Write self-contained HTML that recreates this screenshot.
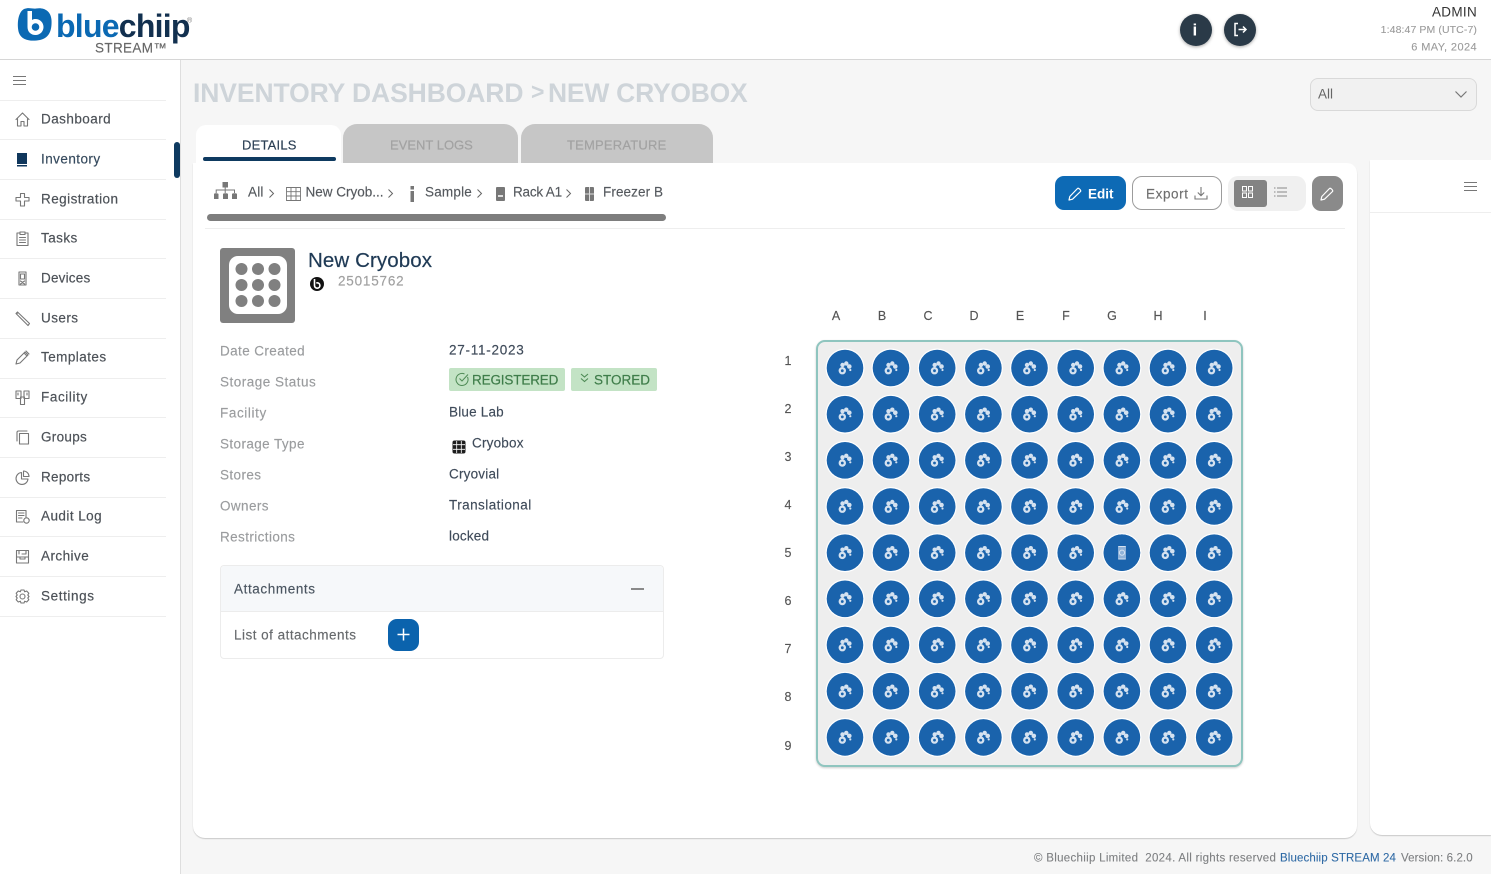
<!DOCTYPE html>
<html lang="en"><head><meta charset="utf-8"><title>Inventory Dashboard</title>
<style>
*{box-sizing:border-box}
html,body{margin:0;padding:0;width:1491px;height:874px;overflow:hidden;background:#f6f6f6;font-family:"Liberation Sans",sans-serif}
.a{position:absolute}
.t{position:absolute;white-space:nowrap;line-height:1;transform:translateY(-50%)}
.nav{font-size:13.5px;color:#4d5258;left:41px;letter-spacing:.45px;-webkit-text-stroke:.2px #4d5258}
.d{position:absolute;left:0;width:166px;height:1px;background:#eeeeee}
.k{font-size:13.5px;color:#9a9c9e;left:220px;letter-spacing:.4px;-webkit-text-stroke:.15px #9a9c9e}
.v{font-size:13.5px;color:#3f4b5a;left:449px;letter-spacing:.3px;-webkit-text-stroke:.15px #3f4b5a}
.bc{font-size:13.5px;color:#55595e;letter-spacing:.2px;-webkit-text-stroke:.15px #55595e}
svg{position:absolute;overflow:visible}
.i{fill:none;stroke:#777;stroke-width:1.1;stroke-linecap:round;stroke-linejoin:round}
.hd{font-size:12.5px;color:#555;top:316px;transform:translate(-50%,-50%);-webkit-text-stroke:.15px #555}
.rw{font-size:12.5px;color:#555;left:788px;transform:translate(-50%,-50%);-webkit-text-stroke:.15px #555}
</style></head><body>

<!-- header -->
<div class="a" style="left:0;top:0;width:1491px;height:60px;background:#fff;border-bottom:1px solid #d6d6d6"></div>
<svg style="left:16px;top:7px" width="38" height="36" viewBox="0 0 38 36"><path d="M8 2C13 0 16 2 20 1.500C28 0 35 4 35.500 13C36 22 34 31 24 33C16 34.500 6 34 3 26C1 20 1 6 8 2Z" fill="#0b69b3"/><path d="M11.500 4V20C11.500 25 15 28 19.500 28C24 28 27.500 24.500 27.500 20C27.500 15.500 24 12 19.500 12C18 12 17 12.300 16 13V4Z" fill="#fff"/><circle cx="19.500" cy="20" r="3.800" fill="#0b69b3"/></svg>
<div class="t" style="left:56px;top:26px;font-size:32px;font-weight:700;letter-spacing:-.75px;color:#0b69b3">blue<span style="color:#12304f">chiip</span></div>
<div class="t" style="left:187px;top:21px;font-size:7px;color:#777">®</div>
<div class="t" style="left:95px;top:48px;font-size:13.500px;color:#666;letter-spacing:.35px;-webkit-text-stroke:.15px #666">STREAM™</div>

<div class="a" style="left:1180px;top:14px;width:32px;height:32px;border-radius:50%;background:#2a3a48;box-shadow:0 1px 3px rgba(0,0,0,.35)"></div>
<div class="t" style="left:1192.500px;top:30px;font-size:17px;font-weight:700;color:#fff">i</div>
<div class="a" style="left:1224px;top:14px;width:32px;height:32px;border-radius:50%;background:#2a3a48;box-shadow:0 1px 3px rgba(0,0,0,.35)"></div>
<svg style="left:1233px;top:22px" width="15" height="15" viewBox="0 0 15 15"><path d="M5 1.500H2V13.500H5M5.500 7.500H13M10 4.500L13 7.500L10 10.500" fill="none" stroke="#fff" stroke-width="1.500"/></svg>

<div class="t" style="right:14px;top:12px;font-size:13.5px;color:#333;letter-spacing:.3px">ADMIN</div>
<div class="t" style="right:14px;top:30px;font-size:10.5px;color:#9a9a9a;letter-spacing:.1px;-webkit-text-stroke:.1px #9a9a9a">1:48:47 PM (UTC-7)</div>
<div class="t" style="right:14px;top:48px;font-size:11px;color:#9a9a9a;letter-spacing:.4px;-webkit-text-stroke:.1px #9a9a9a">6 MAY, 2024</div>

<!-- sidebar -->
<div class="a" style="left:0;top:60px;width:181px;height:814px;background:#fff;border-right:1px solid #dedede"></div>
<svg style="left:13px;top:76px" width="13" height="9"><path d="M0 .500H13M0 4.500H13M0 8.500H13" stroke="#777" stroke-width="1"/></svg>
<div class="d" style="top:100px"></div><div class="d" style="top:139px"></div><div class="d" style="top:179px"></div><div class="d" style="top:219px"></div><div class="d" style="top:258px"></div><div class="d" style="top:298px"></div><div class="d" style="top:338px"></div><div class="d" style="top:378px"></div><div class="d" style="top:417px"></div><div class="d" style="top:457px"></div><div class="d" style="top:497px"></div><div class="d" style="top:536px"></div><div class="d" style="top:576px"></div><div class="d" style="top:616px"></div>
<div class="a" style="left:174px;top:142px;width:6px;height:36px;background:#0e3a60;border-radius:3px"></div>

<div class="t nav" style="top:119px">Dashboard</div>
<div class="t nav" style="top:159px;color:#2f4a63">Inventory</div>
<div class="t nav" style="top:199px">Registration</div>
<div class="t nav" style="top:238px">Tasks</div>
<div class="t nav" style="top:278px;letter-spacing:.2px">Devices</div>
<div class="t nav" style="top:318px">Users</div>
<div class="t nav" style="top:357px">Templates</div>
<div class="t nav" style="top:397px;letter-spacing:.6px">Facility</div>
<div class="t nav" style="top:437px;letter-spacing:.3px">Groups</div>
<div class="t nav" style="top:477px;letter-spacing:.3px">Reports</div>
<div class="t nav" style="top:516px">Audit Log</div>
<div class="t nav" style="top:556px">Archive</div>
<div class="t nav" style="top:596px;letter-spacing:.6px">Settings</div>

<svg style="left:15px;top:112px" width="15" height="15" viewBox="0 0 15 15"><path class="i" d="M1 7.500L7.500 1L14 7.500M2.500 6.500V14H6V9.500H9V14H12.500V6.500"/></svg>
<svg style="left:16px;top:152px" width="12" height="15" viewBox="0 0 12 15"><path d="M1 1H11V12H1Z" fill="#10375c"/><path d="M1 13H11V14.500H1Z" fill="#10375c"/></svg>
<svg style="left:15px;top:192px" width="15" height="15" viewBox="0 0 15 15"><path class="i" d="M5.500 5.500V1.500H9.500V5.500H14V9H9.500V14H5.500V9H1V5.500Z"/></svg>
<svg style="left:16px;top:231px" width="13" height="15" viewBox="0 0 13 15"><path class="i" d="M4 2H1V14.500H12V2H9M4 1H9V3.500H4ZM3.500 6.500H9.500M3.500 9H9.500M3.500 11.500H9.500"/></svg>
<svg style="left:18px;top:271px" width="9" height="15" viewBox="0 0 9 15"><path class="i" d="M1 1H8V14H1ZM2.500 3H6.500V8H2.500ZM2.500 10L6.500 13M6.500 10L2.500 13"/></svg>
<svg style="left:15px;top:311px" width="15" height="15" viewBox="0 0 15 15"><path class="i" d="M1 2.500L2.500 1L14.500 12.500L13 14.500ZM3 1.500L1.500 3"/></svg>
<svg style="left:15px;top:350px" width="15" height="15" viewBox="0 0 15 15"><path class="i" d="M1 14L2 10L10 2L13 5L5 13ZM9 3L12 6M11 1L14 4"/></svg>
<svg style="left:15px;top:390px" width="15" height="15" viewBox="0 0 15 15"><path class="i" d="M1 1H6V8.500H1ZM9 1H14V8.500H9ZM5.500 7H9.500V14.500H5.500ZM3 3V5M12 3V5"/></svg>
<svg style="left:15px;top:430px" width="15" height="15" viewBox="0 0 15 15"><path class="i" d="M2 11V2.500C2 1.500 2.500 1 3.500 1H12M4.500 3.500H13.500V14H4.500Z"/></svg>
<svg style="left:15px;top:470px" width="15" height="15" viewBox="0 0 15 15"><path class="i" d="M6.500 2.500A6 6 0 1 0 13 9H6.500ZM8.500 1A5.500 5.500 0 0 1 14 6.500H8.500Z"/></svg>
<svg style="left:15px;top:509px" width="15" height="15" viewBox="0 0 15 15"><path class="i" d="M11 8V1.500H1.500V13H8M3.500 4H9M3.500 6.500H9M3.500 9H7"/><circle class="i" cx="11.500" cy="11.500" r="2.700"/></svg>
<svg style="left:15px;top:549px" width="15" height="15" viewBox="0 0 15 15"><path class="i" d="M1.500 1.500H13.500V14H1.500ZM1.500 8H13.500M5 8V10H10V8M4 1.500V5M11 1.500V5H7"/></svg>
<svg style="left:15px;top:589px" width="15" height="15" viewBox="0 0 15 15"><circle class="i" cx="7.500" cy="7.500" r="2.500"/><path class="i" d="M6 1H9L9.700 2.800L11.700 2L13.800 4.300L12.800 6L14 7.500L12.800 9L13.800 10.700L11.700 13L9.700 12.200L9 14H6L5.300 12.200L3.300 13L1.200 10.700L2.200 9L1 7.500L2.200 6L1.200 4.300L3.300 2L5.300 2.800Z"/></svg>

<!-- title -->
<div class="t" style="left:193px;top:93px;font-size:26.500px;font-weight:700;color:#ced4d9;letter-spacing:-.1px">INVENTORY DASHBOARD</div>
<div class="t" style="left:531px;top:92px;font-size:23px;font-weight:700;color:#ced4d9">&gt;</div>
<div class="t" style="left:548px;top:93px;font-size:26.500px;font-weight:700;color:#ced4d9;letter-spacing:-.25px">NEW CRYOBOX</div>
<div class="a" style="left:1310px;top:78px;width:167px;height:33px;background:#f1f1f1;border:1px solid #d9d9d9;border-radius:8px"></div>
<div class="t" style="left:1318px;top:94px;font-size:13.5px;color:#666">All</div>
<svg style="left:1455px;top:91px" width="12" height="7"><path d="M.5 .5L6 6L11.500 .5" fill="none" stroke="#777" stroke-width="1.200"/></svg>

<!-- tabs -->
<div class="a" style="left:196px;top:125px;width:145px;height:40px;background:#fff;border-radius:10px 10px 0 0"></div>
<div class="a" style="left:343px;top:124px;width:175px;height:39px;background:#c6c6c6;border-radius:14px 14px 0 0"></div>
<div class="a" style="left:521px;top:124px;width:192px;height:39px;background:#c6c6c6;border-radius:14px 14px 0 0"></div>

<!-- card -->
<div class="a" style="left:193px;top:163px;width:1164px;height:675px;background:#fff;border-radius:0 10px 12px 12px;box-shadow:0 1px 1px #c9c9c9"></div>
<div class="a" style="left:1370px;top:160px;width:121px;height:675px;background:#fff;border-radius:0 0 0 12px;box-shadow:0 1px 1px #c9c9c9"></div>
<div class="a" style="left:1370px;top:212px;width:121px;height:1px;background:#eee"></div>
<svg style="left:1464px;top:182px" width="13" height="9"><path d="M0 .500H13M0 4.500H13M0 8.500H13" stroke="#777" stroke-width="1.100"/></svg>

<div class="t" style="left:242px;top:145px;font-size:13px;color:#2b3f54;letter-spacing:.2px;-webkit-text-stroke:.15px #2b3f54">DETAILS</div>
<div class="a" style="left:203px;top:157px;width:133px;height:4px;background:#0e3a60;border-radius:2px"></div>
<div class="t" style="left:390px;top:145px;font-size:13px;color:#a2a2a2;letter-spacing:0;-webkit-text-stroke:.2px #a2a2a2">EVENT LOGS</div>
<div class="t" style="left:567px;top:145px;font-size:13px;color:#a2a2a2;letter-spacing:.2px;-webkit-text-stroke:.2px #a2a2a2">TEMPERATURE</div>

<!-- breadcrumb -->
<svg style="left:213px;top:182px" width="25" height="18" viewBox="0 0 25 18"><path d="M9.500 0H15V5.500H9.500ZM1 12C1 11 5 11 5.500 12V17H1ZM10 12C10 11 15 11 15 12V17H10ZM19 12C19 11 24 11 24 12V17H19Z" fill="#777"/><path d="M3.200 11V8H21.500V11M12.200 5V11" fill="none" stroke="#777"/></svg>
<div class="t bc" style="left:248px;top:192px">All</div>
<svg style="left:269px;top:189px" width="5" height="9"><path d="M.5 .5L4.500 4.500L.5 8.500" fill="none" stroke="#666"/></svg>
<svg style="left:286px;top:187px" width="15" height="14" viewBox="0 0 15 14"><path d="M.5 .5H14.500V13.500H.5ZM.5 4.700H14.500M.5 9H14.500M5 .5V13.500M10 .5V13.500" fill="none" stroke="#777" stroke-width=".9"/></svg>
<div class="t bc" style="left:305.500px;top:192px;letter-spacing:0">New Cryob...</div>
<svg style="left:388px;top:189px" width="5" height="9"><path d="M.5 .5L4.500 4.500L.5 8.500" fill="none" stroke="#666"/></svg>
<svg style="left:410px;top:186px" width="5" height="16"><path d="M.5 0H4V3.500H.5ZM.5 5H4V16H.5Z" fill="#777"/></svg>
<div class="t bc" style="left:425px;top:192px">Sample</div>
<svg style="left:477px;top:189px" width="5" height="9"><path d="M.5 .5L4.500 4.500L.5 8.500" fill="none" stroke="#666"/></svg>
<svg style="left:496px;top:187px" width="10" height="14"><rect width="9" height="14" rx="1" fill="#777"/><rect x="2" y="8" width="5" height="2" fill="#ddd"/></svg>
<div class="t bc" style="left:513px;top:192px;letter-spacing:-.2px">Rack A1</div>
<svg style="left:566px;top:189px" width="5" height="9"><path d="M.5 .5L4.500 4.500L.5 8.500" fill="none" stroke="#666"/></svg>
<svg style="left:585px;top:187px" width="10" height="14"><rect width="9" height="14" rx="1" fill="#777"/><path d="M4.500 0V14M0 7H9" stroke="#ddd"/></svg>
<div class="t bc" style="left:603px;top:192px;letter-spacing:.1px">Freezer B</div>
<div class="a" style="left:207px;top:214px;width:459px;height:7px;background:#7e7e7e;border-radius:4px"></div>
<div class="a" style="left:205px;top:228px;width:1140px;height:1px;background:#eeeeee"></div>

<!-- toolbar -->
<div class="a" style="left:1055px;top:176px;width:71px;height:34px;background:#0d6ab5;border-radius:9px"></div>
<svg style="left:1068px;top:187px" width="14" height="14" viewBox="0 0 14 14"><path d="M1 13L1.800 9.500L9.500 1.500C10.500 .5 13.500 3.500 12.500 4.500L4.500 12.200Z" fill="none" stroke="#fff" stroke-width="1.200" stroke-linejoin="round"/></svg>
<div class="t" style="left:1088px;top:193.500px;font-size:13.500px;font-weight:700;color:#fff">Edit</div>
<div class="a" style="left:1132px;top:176px;width:90px;height:34px;background:#fff;border:1px solid #9c9c9c;border-radius:10px"></div>
<div class="t" style="left:1146px;top:193.500px;font-size:13.500px;color:#6e6e6e;letter-spacing:.6px;-webkit-text-stroke:.15px #6e6e6e">Export</div>
<svg style="left:1194px;top:186px" width="14" height="14" viewBox="0 0 14 14"><path d="M7 1V9.500M3.800 6.500L7 9.700L10.200 6.500M1 9.500V13H13V9.500" fill="none" stroke="#777" stroke-width="1.100"/></svg>
<div class="a" style="left:1228px;top:176px;width:78px;height:35px;background:#f0f0f0;border-radius:10px"></div>
<div class="a" style="left:1234px;top:180px;width:33px;height:27px;background:#838383;border-radius:3px"></div>
<svg style="left:1241px;top:186px" width="13" height="12" viewBox="0 0 13 12"><path d="M1.500 .5H5.500V5H1.500ZM7.500 .5H11.500V5H7.500ZM1.500 7H5.500V11.500H1.500ZM7.500 7H11.500V11.500H7.500Z" fill="none" stroke="#fff" stroke-width="1"/></svg>
<svg style="left:1274px;top:187px" width="13" height="10" viewBox="0 0 13 10"><path d="M3 1H13M3 5H13M3 9H13M0 1H1.500M0 5H1.500M0 9H1.500" stroke="#888"/></svg>
<div class="a" style="left:1312px;top:176px;width:31px;height:35px;background:#8a8a8a;border-radius:9px"></div>
<svg style="left:1320px;top:187px" width="14" height="14" viewBox="0 0 14 14"><path d="M1 13L1.800 9.500L9.500 1.500C10.500 .5 13.500 3.500 12.500 4.500L4.500 12.200Z" fill="none" stroke="#fff" stroke-width="1.200" stroke-linejoin="round"/></svg>

<!-- identity -->
<div class="a" style="left:220px;top:248px;width:75px;height:75px;background:#808080;border-radius:3px"></div>
<div class="a" style="left:229px;top:256px;width:58px;height:58px;background:#fff;border-radius:9px"></div>
<svg style="left:229px;top:256px" width="58" height="58"><g fill="#808080"><circle cx="12.500" cy="13" r="6"/><circle cx="29" cy="13" r="6"/><circle cx="45.500" cy="13" r="6"/><circle cx="12.500" cy="29" r="6"/><circle cx="29" cy="29" r="6"/><circle cx="45.500" cy="29" r="6"/><circle cx="12.500" cy="45" r="6"/><circle cx="29" cy="45" r="6"/><circle cx="45.500" cy="45" r="6"/></g></svg>
<div class="t" style="left:308px;top:261px;font-size:20.500px;color:#1f3a55;letter-spacing:.1px;-webkit-text-stroke:.2px #1f3a55">New Cryobox</div>
<svg style="left:310px;top:277px" width="14" height="14" viewBox="0 0 14 14"><circle cx="7" cy="7" r="7" fill="#111"/><path d="M4.500 2V8.500A2.700 2.700 0 1 0 7.200 5.800H6.300" fill="none" stroke="#fff" stroke-width="1.600"/></svg>
<div class="t" style="left:338px;top:281px;font-size:13.500px;color:#a0a0a0;letter-spacing:.8px;-webkit-text-stroke:.15px #a0a0a0">25015762</div>

<!-- details -->
<div class="t k" style="top:351px">Date Created</div>
<div class="t k" style="top:382px;letter-spacing:.5px">Storage Status</div>
<div class="t k" style="top:413px;letter-spacing:.6px">Facility</div>
<div class="t k" style="top:444px">Storage Type</div>
<div class="t k" style="top:475px">Stores</div>
<div class="t k" style="top:506px">Owners</div>
<div class="t k" style="top:537px">Restrictions</div>
<div class="t v" style="top:350px;letter-spacing:.75px">27-11-2023</div>
<div class="a" style="left:449px;top:368px;width:116px;height:23px;background:#c3e3c5;border-radius:2px"></div>
<svg style="left:455px;top:372px" width="14" height="14" viewBox="0 0 14 14"><path d="M12.500 5A6 6 0 1 1 9.500 2M4.500 6.500L7 9L13 2.500" fill="none" stroke="#4e8a55" stroke-width="1"/></svg>
<div class="t" style="left:472px;top:380px;font-size:13.500px;color:#3f7d4a;letter-spacing:-.15px;-webkit-text-stroke:.2px #3f7d4a">REGISTERED</div>
<div class="a" style="left:571px;top:368px;width:86px;height:23px;background:#c3e3c5;border-radius:2px"></div>
<svg style="left:580px;top:373px" width="9" height="10" viewBox="0 0 9 10"><path d="M1 1L4.500 4L8 1M1 5.500L4.500 8.500L8 5.500" fill="none" stroke="#4e8a55" stroke-width="1.100"/></svg>
<div class="t" style="left:594px;top:380px;font-size:13.500px;color:#3f7d4a;letter-spacing:0;-webkit-text-stroke:.2px #3f7d4a">STORED</div>
<div class="t v" style="top:412px;letter-spacing:.2px">Blue Lab</div>
<svg style="left:452px;top:440px" width="14" height="14" viewBox="0 0 14 14"><rect x=".5" y=".5" width="13" height="13" rx="2" fill="#1d1d1d"/><path d="M4.700 1V13M9.300 1V13M1 4.700H13M1 9.300H13" stroke="#fff" stroke-width=".8"/></svg>
<div class="t v" style="left:472px;top:443px;letter-spacing:.2px">Cryobox</div>
<div class="t v" style="top:474px;letter-spacing:.2px">Cryovial</div>
<div class="t v" style="top:505px;letter-spacing:.45px">Translational</div>
<div class="t v" style="top:536px;letter-spacing:.2px">locked</div>

<!-- attachments -->
<div class="a" style="left:220px;top:565px;width:444px;height:94px;background:#fff;border:1px solid #ececec;border-radius:4px"></div>
<div class="a" style="left:221px;top:566px;width:442px;height:46px;background:#f6f8fa;border-bottom:1px solid #ececec;border-radius:4px 4px 0 0"></div>
<div class="t" style="left:234px;top:589px;font-size:13.500px;color:#4a5560;letter-spacing:.6px;-webkit-text-stroke:.15px #4a5560">Attachments</div>
<div class="a" style="left:631px;top:588px;width:13px;height:1.500px;background:#8a8a8a"></div>
<div class="t" style="left:234px;top:635px;font-size:13.500px;color:#66696c;letter-spacing:.48px;-webkit-text-stroke:.15px #66696c">List of attachments</div>
<div class="a" style="left:388px;top:619px;width:31px;height:32px;background:#0b63ad;border-radius:9px"></div>
<svg style="left:397px;top:628px" width="13" height="13"><path d="M6.500 .5V12.500M.5 6.500H12.500" stroke="#fff" stroke-width="1.500"/></svg>

<!-- plate labels -->
<div class="t hd" style="left:836px">A</div><div class="t hd" style="left:882px">B</div><div class="t hd" style="left:928px">C</div><div class="t hd" style="left:974px">D</div><div class="t hd" style="left:1020px">E</div><div class="t hd" style="left:1066px">F</div><div class="t hd" style="left:1112px">G</div><div class="t hd" style="left:1158px">H</div><div class="t hd" style="left:1205px">I</div>
<div class="t rw" style="top:361px">1</div><div class="t rw" style="top:409px">2</div><div class="t rw" style="top:457px">3</div><div class="t rw" style="top:505px">4</div><div class="t rw" style="top:553px">5</div><div class="t rw" style="top:601px">6</div><div class="t rw" style="top:649px">7</div><div class="t rw" style="top:697px">8</div><div class="t rw" style="top:746px">9</div>

<!-- plate -->
<div class="a" style="left:816px;top:340px;width:427px;height:427px;background:#eeeeee;border:2px solid #8fc5bf;border-radius:9px;box-shadow:0 1px 2px rgba(0,0,0,.2)"></div>
<svg style="left:0;top:0" width="1491" height="874">
<defs>
<g id="w"><circle r="19.500" fill="#fff"/><circle r="18.300" fill="#1a63ac"/>
<g fill="#d5e2f0"><circle cx="-2.700" cy="2.700" r="3.700"/><circle cx="-2.500" cy="-3" r="2.200"/><circle cx="1.300" cy="-4.500" r="2.200"/><circle cx="4.300" cy="-1.500" r="2.300"/><circle cx="5.300" cy="2" r="1.100"/></g>
<circle cx="-2.700" cy="2.700" r="1.400" fill="#1a63ac"/></g>
<g id="r"><use href="#w" x="845"/><use href="#w" x="891"/><use href="#w" x="937.200"/><use href="#w" x="983.400"/><use href="#w" x="1029.500"/><use href="#w" x="1075.700"/><use href="#w" x="1121.900"/><use href="#w" x="1168"/><use href="#w" x="1214.200"/></g>
</defs>
<use href="#r" y="368"/><use href="#r" y="414.200"/><use href="#r" y="460.300"/><use href="#r" y="506.500"/><use href="#r" y="552.700"/><use href="#r" y="598.800"/><use href="#r" y="645"/><use href="#r" y="691.200"/><use href="#r" y="737.400"/>
<circle cx="1121.900" cy="552.700" r="18.300" fill="#1a63ac"/>
<rect x="1118" y="546" width="8" height="13.500" fill="#8fb2d8"/>
<circle cx="1122" cy="552.700" r="2.600" fill="none" stroke="#d5e2f0"/>
<path d="M1118.500 546.500H1125.500M1118.500 559H1125.500" stroke="#d5e2f0"/>
</svg>

<!-- footer -->
<div class="t" style="left:1034px;top:859px;font-size:11.500px;color:#7d7f81;letter-spacing:.3px;-webkit-text-stroke:.1px #7d7f81">© Bluechiip Limited&nbsp; 2024. All rights reserved</div>
<div class="t" style="left:1280px;top:859px;font-size:11.500px;color:#2f6aa5;letter-spacing:.12px;-webkit-text-stroke:.1px #2f6aa5">Bluechiip STREAM 24</div>
<div class="t" style="left:1401px;top:859px;font-size:11.500px;color:#7d7f81;letter-spacing:.1px;-webkit-text-stroke:.1px #7d7f81">Version: 6.2.0</div>
</body></html>
